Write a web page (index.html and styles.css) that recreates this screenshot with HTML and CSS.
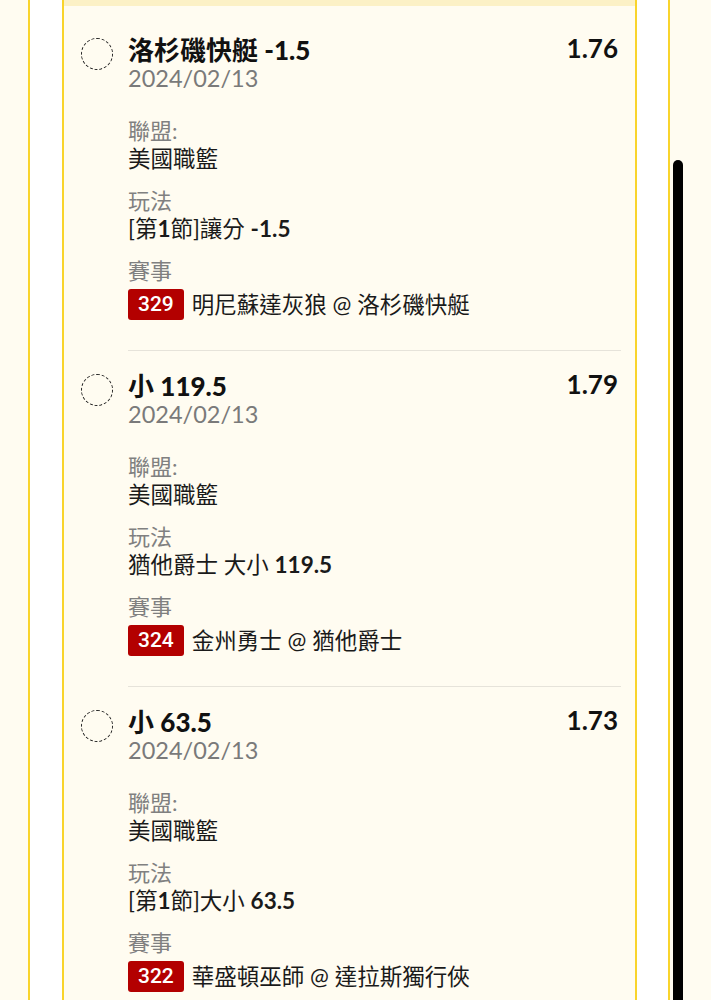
FILE: index.html
```html
<!doctype html>
<html lang="zh-Hant">
<head>
    <meta charset="utf-8">
    <meta name="viewport" content="width=device-width, initial-scale=1.0">
    <title>投注單</title>
    <link rel="stylesheet" href="styles.css">
</head>

<body>
    <div class="page">
        <div class="card">
            <div class="card-top"></div>
            <div class="bet-list">
                <!-- 第一注 -->
                <div class="bet-item">
                    <span class="bet-check"></span>
                    <div class="bet-body">
                        <div class="bet-head">
                            <div class="bet-title">洛杉磯快艇 <b>-1.5</b></div>
                            <div class="bet-odds">1.76</div>
                        </div>
                        <div class="bet-date">2024/02/13</div>
                        <div class="bet-field">
                            <div class="field-label">聯盟:</div>
                            <div class="field-value">美國職籃</div>
                        </div>
                        <div class="bet-field">
                            <div class="field-label">玩法</div>
                            <div class="field-value">[第<b>1</b>節]讓分 <b>-1.5</b></div>
                        </div>
                        <div class="bet-field">
                            <div class="field-label">賽事</div>
                            <div class="match-row">
                                <span class="match-no">329</span>
                                <span class="field-value">明尼蘇達灰狼 @ 洛杉磯快艇</span>
                            </div>
                        </div>
                    </div>
                </div>

                <!-- 第二注 -->
                <div class="bet-item">
                    <span class="bet-check"></span>
                    <div class="bet-body">
                        <div class="bet-head">
                            <div class="bet-title">小 <b>119.5</b></div>
                            <div class="bet-odds">1.79</div>
                        </div>
                        <div class="bet-date">2024/02/13</div>
                        <div class="bet-field">
                            <div class="field-label">聯盟:</div>
                            <div class="field-value">美國職籃</div>
                        </div>
                        <div class="bet-field">
                            <div class="field-label">玩法</div>
                            <div class="field-value">猶他爵士 大小 <b>119.5</b></div>
                        </div>
                        <div class="bet-field">
                            <div class="field-label">賽事</div>
                            <div class="match-row">
                                <span class="match-no">324</span>
                                <span class="field-value">金州勇士 @ 猶他爵士</span>
                            </div>
                        </div>
                    </div>
                </div>

                <!-- 第三注 -->
                <div class="bet-item">
                    <span class="bet-check"></span>
                    <div class="bet-body">
                        <div class="bet-head">
                            <div class="bet-title">小 <b>63.5</b></div>
                            <div class="bet-odds">1.73</div>
                        </div>
                        <div class="bet-date">2024/02/13</div>
                        <div class="bet-field">
                            <div class="field-label">聯盟:</div>
                            <div class="field-value">美國職籃</div>
                        </div>
                        <div class="bet-field">
                            <div class="field-label">玩法</div>
                            <div class="field-value">[第<b>1</b>節]大小 <b>63.5</b></div>
                        </div>
                        <div class="bet-field">
                            <div class="field-label">賽事</div>
                            <div class="match-row">
                                <span class="match-no">322</span>
                                <span class="field-value">華盛頓巫師 @ 達拉斯獨行俠</span>
                            </div>
                        </div>
                    </div>
                </div>
            </div>
        </div>
    </div>

    <div class="scroll-thumb"></div>
</body>
</html>
```

FILE: styles.css
```css
html, body {
    height: 100%;
    overflow: hidden;
}
body {
    margin: 0;
    background-color: #fffcf1;
    font-family: Lato, "Noto Sans CJK TC", sans-serif;
    color: #1a1a1a;
}
.page {
    margin-left: 28px;
    width: 575px;
    min-height: 100%;
    padding: 0 31px 0 32px;
    background: #ffffff;
    border-left: 2px solid #f9d42c;
    border-right: 2px solid #f9d42c;
}
.card {
    min-height: 100vh;
    background-color: #fffcf1;
    border-left: 2px solid #f9d42c;
    border-right: 2px solid #f9d42c;
}
.card-top {
    height: 6px;
    background-color: #fcf1c6;
}
.bet-list {
    padding-top: 9px;
}
.bet-item {
    display: flex;
    padding: 18px 14px 0 17px;
}
.bet-check {
    flex: none;
    width: 30px;
    height: 30px;
    margin-top: 5px;
    margin-right: 15px;
    border: 1.6px dashed #222;
    border-radius: 50%;
}
.bet-body {
    flex: 1;
    padding-bottom: 30px;
    border-bottom: 1px solid #e6e3da;
}
.bet-head {
    display: flex;
    justify-content: space-between;
    align-items: center;
    height: 30px;
}
.bet-title {
    font-size: 26px;
    font-weight: bold;
    color: #111;
}
.bet-odds {
    font-size: 26px;
    font-weight: bold;
    color: #111;
    padding-right: 3px;
}
.bet-date {
    font-size: 23.5px;
    line-height: 30px;
    color: #7a7a7a;
    margin-bottom: 24px;
}
.bet-field {
    margin-bottom: 14px;
}
.bet-field:last-child {
    margin-bottom: 0;
}
.field-label {
    font-size: 22px;
    line-height: 28px;
    color: #808080;
}
.field-value {
    font-size: 22.5px;
    line-height: 28px;
    color: #1a1a1a;
}
.field-value b {
    font-weight: bold;
}
.match-row {
    display: flex;
    align-items: center;
    gap: 8px;
    margin-top: 4px;
}
.match-no {
    height: 31px;
    line-height: 31px;
    padding: 0 10px;
    background-color: #b30000;
    color: #fff;
    font-family: Roboto, "Noto Sans", sans-serif;
    font-size: 21px;
    font-weight: 500;
    border-radius: 3px;
}
.scroll-thumb {
    position: fixed;
    left: 673px;
    top: 160px;
    bottom: 0;
    width: 10px;
    background: #000;
    border-radius: 5px 5px 0 0;
}
```
